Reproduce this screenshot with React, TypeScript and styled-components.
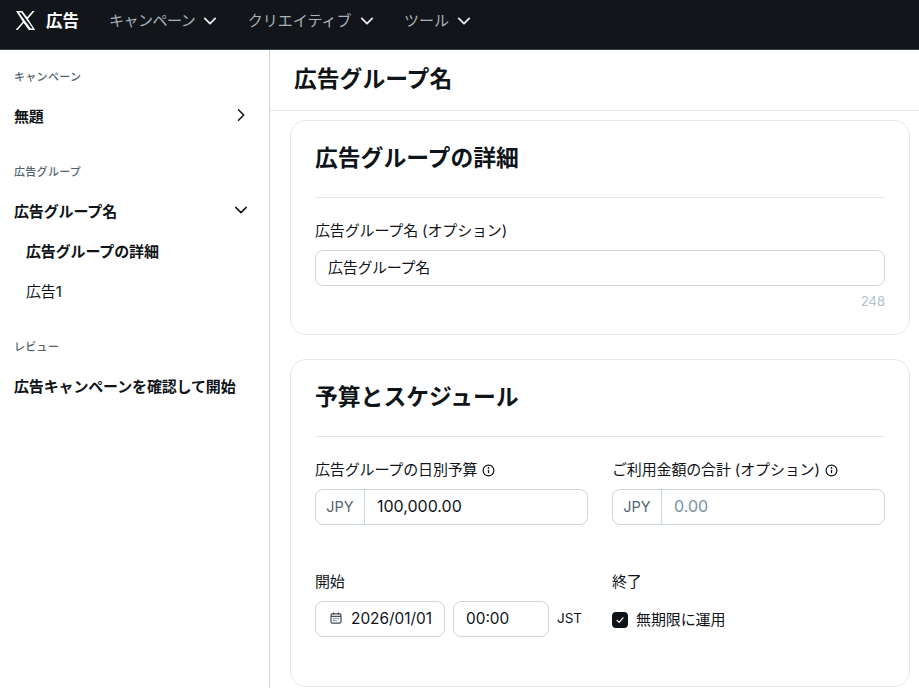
import React from "react";
import styled, { createGlobalStyle } from "styled-components";

const GlobalStyle = createGlobalStyle`
  html, body {
    margin: 0;
    padding: 0;
    height: 100%;
    overflow: hidden;
    background: #fff;
  }
  body {
    font-family: Inter, "Noto Sans CJK JP", "Noto Sans", sans-serif;
    color: #0f1419;
  }
  * {
    box-sizing: border-box;
  }
`;

const Chevron = ({ dir = "down", size = 16 }: { dir?: "down" | "right"; size?: number }) => (
  <svg width={size} height={size} viewBox="0 0 16 16" fill="none">
    <path
      d={dir === "down" ? "M2.8 5.4l5.2 5.2 5.2-5.2" : "M5.5 2.8l5.2 5.2-5.2 5.2"}
      stroke="currentColor"
      strokeWidth="1.5"
      strokeLinecap="round"
      strokeLinejoin="round"
    />
  </svg>
);

const InfoIcon = () => (
  <svg width="13" height="13" viewBox="0 0 13 13" fill="none">
    <circle cx="6.5" cy="6.5" r="5.4" stroke="#0f1419" strokeWidth="1.2" />
    <path d="M6.5 5.8v3.4" stroke="#0f1419" strokeWidth="1.3" />
    <circle cx="6.5" cy="3.9" r="0.85" fill="#0f1419" />
  </svg>
);

const CalendarIcon = () => (
  <svg width="12" height="12" viewBox="0 0 12 12" fill="none">
    <rect x="1" y="1.8" width="10" height="9.4" rx="1.4" stroke="#3f4d58" strokeWidth="1.2" />
    <path d="M1 4.4h10M3.5.6v2M8.5.6v2" stroke="#3f4d58" strokeWidth="1.2" />
    <path d="M3.2 6.6h1.6M5.4 6.6h1.2M7.4 6.6h1.4M3.2 8.6h1.6M5.4 8.6h1.2" stroke="#3f4d58" strokeWidth="0.9" />
  </svg>
);

const XLogo = () => (
  <svg width="21" height="21" viewBox="0 0 24 24" fill="none">
    <path
      d="M1.2 1.2h7.3l5.3 7.2 6.3-7.2h2.3l-7.6 8.7 8.2 12.9h-7.2l-5.9-8-7 8H.7l8.2-9.4L1.2 1.2zm3.3 1.6l13.4 18.4h2.5L7.2 2.8H4.5z"
      fill="#fff"
    />
  </svg>
);

const CheckMark = () => (
  <svg width="10" height="10" viewBox="0 0 10 10" fill="none">
    <path d="M2 5.3l2.1 2.1L8 2.8" stroke="#fff" strokeWidth="1.2" strokeLinecap="round" strokeLinejoin="round" />
  </svg>
);

const App = () => {
  return (
    <Page>
      <GlobalStyle />
      <TopBar>
        <Brand>
          <XLogo />
          <BrandName>広告</BrandName>
        </Brand>
        <TopMenu>
          <TopMenuItem tight>
            キャンペーン
            <Chevron />
          </TopMenuItem>
          <TopMenuItem>
            クリエイティブ
            <Chevron />
          </TopMenuItem>
          <TopMenuItem>
            ツール
            <Chevron />
          </TopMenuItem>
        </TopMenu>
      </TopBar>
      <Body>
        <Sidebar>
          <SideSection>
            <SideLabel>キャンペーン</SideLabel>
            <SideRow>
              無題
              <Chevron dir="right" />
            </SideRow>
          </SideSection>
          <SideSection>
            <SideLabel>広告グループ</SideLabel>
            <SideRow>
              広告グループ名
              <Chevron />
            </SideRow>
            <SideSubRow active>広告グループの詳細</SideSubRow>
            <SideSubRow>広告1</SideSubRow>
          </SideSection>
          <SideSection>
            <SideLabel>レビュー</SideLabel>
            <SideRow>広告キャンペーンを確認して開始</SideRow>
          </SideSection>
        </Sidebar>
        <Main>
          <TitleBar>広告グループ名</TitleBar>
          <Cards>
            <Card>
              <CardTitle>広告グループの詳細</CardTitle>
              <Divider />
              <Label>広告グループ名 (オプション)</Label>
              <InputBox>
                <InputValue>広告グループ名</InputValue>
              </InputBox>
              <Counter>248</Counter>
            </Card>
            <ScheduleCard>
              <CardTitle>予算とスケジュール</CardTitle>
              <Divider />
              <FieldGrid>
                <Field>
                  <Label>
                    広告グループの日別予算 <InfoIcon />
                  </Label>
                  <InputBox>
                    <Currency>JPY</Currency>
                    <AmountValue>100,000.00</AmountValue>
                  </InputBox>
                </Field>
                <Field>
                  <Label>
                    ご利用金額の合計 (オプション) <InfoIcon />
                  </Label>
                  <InputBox>
                    <Currency>JPY</Currency>
                    <AmountValue empty>0.00</AmountValue>
                  </InputBox>
                </Field>
                <Field>
                  <Label>開始</Label>
                  <DateRow>
                    <DateBox>
                      <CalendarIcon />
                      2026/01/01
                    </DateBox>
                    <TimeBox>00:00</TimeBox>
                    <TimeZone>JST</TimeZone>
                  </DateRow>
                </Field>
                <Field>
                  <Label>終了</Label>
                  <CheckRow>
                    <CheckBox>
                      <CheckMark />
                    </CheckBox>
                    無期限に運用
                  </CheckRow>
                </Field>
              </FieldGrid>
            </ScheduleCard>
          </Cards>
        </Main>
      </Body>
    </Page>
  );
};

export default App;

const Page = styled.div`
  width: 919px;
  height: 688px;
  display: flex;
  flex-direction: column;
  overflow: hidden;
`;

const TopBar = styled.header`
  height: 50px;
  flex: none;
  background: #12161b;
  border-bottom: 1px solid #38444d;
  display: flex;
  align-items: center;
  padding: 0 0 8px 15px;
`;

const Brand = styled.div`
  display: flex;
  align-items: center;
  gap: 10px;
  color: #fff;
`;

const BrandName = styled.div`
  font-size: 16.5px;
  font-weight: 700;
  line-height: 20px;
`;

const TopMenu = styled.nav`
  display: flex;
  margin-left: 30px;
  gap: 29.5px;
`;

const TopMenuItem = styled.div<{ tight?: boolean }>`
  display: flex;
  align-items: center;
  gap: 7px;
  font-size: 15px;
  line-height: 20px;
  letter-spacing: ${(props) => (props.tight ? "-0.5px" : "0")};
  color: #a9b2b8;
  svg {
    color: #e1e8ed;
  }
  svg path {
    stroke-width: 1.9;
  }
`;

const Body = styled.div`
  flex: 1;
  display: flex;
  min-height: 0;
`;

const Sidebar = styled.aside`
  width: 270px;
  flex: none;
  border-right: 1px solid #ccd6dd;
  padding: 20px 20px 0 14px;
  display: flex;
  flex-direction: column;
  gap: 30px;
`;

const SideSection = styled.div`
  display: flex;
  flex-direction: column;
`;

const SideLabel = styled.div`
  font-size: 11px;
  font-weight: 500;
  line-height: 14px;
  letter-spacing: 0.3px;
  color: #536471;
  margin-bottom: 11px;
`;

const SideRow = styled.div`
  height: 40px;
  display: flex;
  align-items: center;
  justify-content: space-between;
  font-size: 15px;
  font-weight: 700;
  letter-spacing: -0.15px;
  color: #0f1419;
`;

const SideSubRow = styled.div<{ active?: boolean }>`
  height: 40px;
  display: flex;
  align-items: center;
  padding-left: 12px;
  font-size: 15px;
  letter-spacing: -0.15px;
  font-weight: ${(props) => (props.active ? 700 : 400)};
`;

const Main = styled.main`
  flex: 1;
  min-width: 0;
  display: flex;
  flex-direction: column;
`;

const TitleBar = styled.div`
  height: 61px;
  flex: none;
  border-bottom: 1px solid #e1e8ed;
  padding: 0 0 6px 24px;
  display: flex;
  align-items: center;
  font-size: 22.8px;
  font-weight: 700;
`;

const Cards = styled.div`
  padding: 9px 9px 0 20px;
  display: flex;
  flex-direction: column;
  gap: 24px;
`;

const Card = styled.section`
  height: 215px;
  flex: none;
  border: 1px solid #e1e8ed;
  border-radius: 16px;
  padding: 0 24px;
`;

const ScheduleCard = styled(Card)`
  height: 328px;
`;

const CardTitle = styled.h2`
  margin: 0;
  height: 76px;
  padding-bottom: 6px;
  display: flex;
  align-items: center;
  font-size: 22.8px;
  font-weight: 700;
`;

const Divider = styled.div`
  height: 1px;
  background: #e1e8ed;
  margin-bottom: 22px;
`;

const Label = styled.div`
  display: flex;
  align-items: center;
  gap: 5px;
  font-size: 15px;
  line-height: 22px;
  height: 22px;
  margin-bottom: 8px;
  letter-spacing: -0.15px;
  white-space: nowrap;
`;

const InputBox = styled.div`
  height: 36px;
  border: 1px solid #ccd6dd;
  border-radius: 8px;
  display: flex;
  align-items: center;
  font-size: 15px;
`;

const InputValue = styled.div`
  padding: 0 0 3px 12px;
  letter-spacing: -0.3px;
`;

const AmountValue = styled.div<{ empty?: boolean }>`
  padding: 0 0 2px 12px;
  font-size: 16px;
  color: ${(props) => (props.empty ? "#7a8fa0" : "#0f1419")};
`;

const Currency = styled.div`
  width: 49px;
  height: 100%;
  flex: none;
  border-right: 1px solid #ccd6dd;
  padding-bottom: 2px;
  display: flex;
  align-items: center;
  justify-content: center;
  font-size: 14.5px;
  font-weight: 400;
  color: #536471;
`;

const Counter = styled.div`
  margin-top: 7px;
  text-align: right;
  font-size: 13px;
  font-weight: 400;
  line-height: 16px;
  color: #b0c0cc;
`;

const FieldGrid = styled.div`
  display: grid;
  grid-template-columns: 273px 273px;
  column-gap: 24px;
  row-gap: 46px;
  margin-top: 1px;
`;

const Field = styled.div`
  min-width: 0;
`;

const DateRow = styled.div`
  display: flex;
  align-items: center;
  font-size: 15.4px;
  gap: 8px;
`;

const DateBox = styled.div`
  width: 130px;
  height: 36px;
  border: 1px solid #ccd6dd;
  border-radius: 8px;
  padding-bottom: 2px;
  display: flex;
  align-items: center;
  gap: 9px;
  padding-left: 14px;
  white-space: nowrap;
`;

const TimeBox = styled.div`
  width: 96px;
  height: 36px;
  border: 1px solid #ccd6dd;
  border-radius: 8px;
  padding-bottom: 2px;
  display: flex;
  align-items: center;
  padding-left: 12px;
`;

const TimeZone = styled.span`
  font-size: 13.5px;
  padding-bottom: 2px;
`;

const CheckRow = styled.div`
  height: 36px;
  padding-bottom: 2px;
  display: flex;
  align-items: center;
  gap: 8px;
  font-size: 15px;
  letter-spacing: -0.1px;
`;

const CheckBox = styled.div`
  width: 16px;
  height: 16px;
  margin-top: 4px;
  border-radius: 4px;
  background: #0f1419;
  display: flex;
  align-items: center;
  justify-content: center;
`;
